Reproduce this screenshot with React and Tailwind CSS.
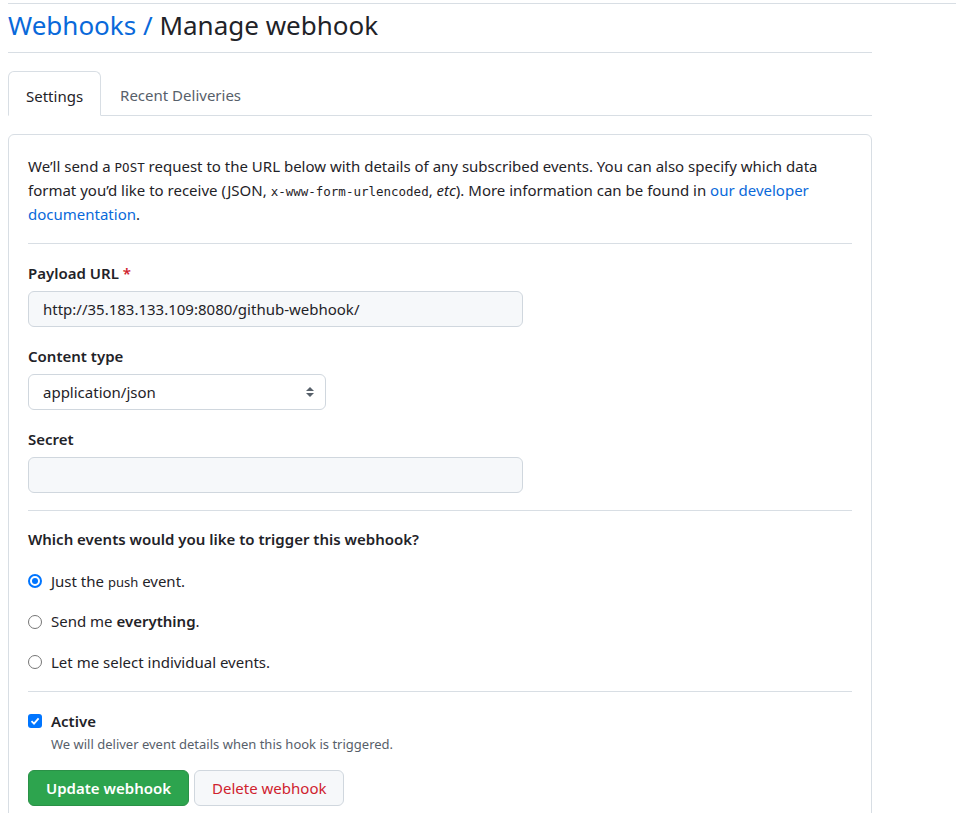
import React from 'react';

const font = { fontFamily: '"Noto Sans", "Liberation Sans", sans-serif' };
const mono = { fontFamily: '"DejaVu Sans Mono", monospace' };

const Radio = ({ checked, children }) => (
    <label className="flex items-center h-[24px]">
        <span
            className={`w-[14px] h-[14px] rounded-full flex items-center justify-center shrink-0 ${
                checked ? 'border-2 border-[#0075ff]' : 'border border-[#767676]'
            }`}
        >
            {checked ? <span className="w-[6px] h-[6px] rounded-full bg-[#0075ff]" /> : null}
        </span>
        <span className="ml-[9px] text-[15px] text-[#1f2328]">{children}</span>
    </label>
);

const App = () => {
    return (
        <div className="min-h-screen bg-white text-[#1f2328]" style={font}>
            <div className="pt-[3px]">
                <div className="ml-2 border-t border-[#d8dee4]" />
            </div>
            <div className="ml-2 w-[864px]">
                <div className="h-[49px] flex items-center border-b border-[#d8dee4] pb-[6px]">
                    <h1 className="text-[26px] leading-[32px] font-normal">
                        <span className="text-[#0969da]">Webhooks</span>
                        <span className="text-[#0969da]"> / </span>
                        <span>Manage webhook</span>
                    </h1>
                </div>

                <nav className="mt-[18px] flex items-end border-b border-[#d8dee4] h-[45px]">
                    <div className="h-[45px] -mb-px px-[17px] pt-[5px] flex items-center border border-[#d8dee4] border-b-white bg-white rounded-t-[6px] text-[15px] text-[#1f2328]">
                        Settings
                    </div>
                    <div className="h-[45px] px-[19px] pt-[5px] flex items-center text-[15px] text-[#57606a]">
                        Recent Deliveries
                    </div>
                </nav>

                <div className="mt-[18px] border border-[#d8dee4] rounded-[6px] px-[19px] pt-[19px] pb-[20px]">
                    <p className="text-[15px] leading-[24px] text-[#1f2328]">
                        We’ll send a{' '}
                        <code className="text-[12.5px] leading-none" style={mono}>
                            POST
                        </code>{' '}
                        request to the URL below with details of any subscribed events. You can also specify which data
                        format you’d like to receive (JSON,{' '}
                        <code className="text-[12.5px] leading-none" style={mono}>
                            x-www-form-urlencoded
                        </code>
                        , <em>etc</em>). More information can be found in{' '}
                        <a className="text-[#0969da]">our developer documentation</a>.
                    </p>

                    <div className="mt-[17px] border-t border-[#d8dee4]" />

                    <div className="mt-[19px] text-[15px] leading-[21px] font-semibold">
                        Payload URL <span className="text-[#cf222e]">*</span>
                    </div>
                    <div className="mt-[7px] w-[495px] h-[36px] border border-[#d0d7de] rounded-[6px] bg-[#f6f8fa] flex items-center px-[14px] text-[15px]">
                        http://35.183.133.109:8080/github-webhook/
                    </div>

                    <div className="mt-[19px] text-[15px] leading-[21px] font-semibold">Content type</div>
                    <div className="mt-[7px] w-[298px] h-[36px] border border-[#d0d7de] rounded-[6px] bg-white flex items-center justify-between pl-[14px] pr-[10px] text-[15px]">
                        <span>application/json</span>
                        <svg width="10" height="14" viewBox="0 0 10 14">
                            <path d="M5 2 L9 6 H1 Z" fill="#57606a" />
                            <path d="M5 12 L9 8 H1 Z" fill="#57606a" />
                        </svg>
                    </div>

                    <div className="mt-[19px] text-[15px] leading-[21px] font-semibold">Secret</div>
                    <div className="mt-[7px] w-[495px] h-[36px] border border-[#d0d7de] rounded-[6px] bg-[#f6f8fa]" />

                    <div className="mt-[17px] border-t border-[#d8dee4]" />

                    <div className="mt-[16px] text-[15px] leading-[24px] font-semibold">
                        Which events would you like to trigger this webhook?
                    </div>

                    <div className="mt-[18px] flex flex-col gap-[16.5px]">
                        <Radio checked>
                            Just the{' '}
                            <code className="text-[13px] leading-none" style={font}>
                                push
                            </code>{' '}
                            event.
                        </Radio>
                        <Radio>
                            Send me <strong className="font-semibold">everything</strong>.
                        </Radio>
                        <Radio>Let me select individual events.</Radio>
                    </div>

                    <div className="mt-[17px] border-t border-[#d8dee4]" />

                    <div className="mt-[17px] flex items-center h-[24px]">
                        <span className="w-[14px] h-[14px] rounded-[3px] bg-[#0075ff] flex items-center justify-center">
                            <svg width="10" height="10" viewBox="0 0 10 10">
                                <path d="M1.5 5.2 L4 7.6 L8.6 2.4" stroke="white" strokeWidth="1.8" fill="none" />
                            </svg>
                        </span>
                        <span className="ml-[9px] text-[15px] font-semibold">Active</span>
                    </div>
                    <div className="ml-[23px] mt-px text-[13px] leading-[20px] text-[#57606a]">
                        We will deliver event details when this hook is triggered.
                    </div>

                    <div className="mt-[16px] flex gap-[5px]">
                        <button className="h-[36px] px-[17px] rounded-[6px] bg-[#2da44e] border border-[#2a9147] text-white text-[15px] font-semibold">
                            Update webhook
                        </button>
                        <button className="h-[36px] px-[17px] rounded-[6px] bg-[#f6f8fa] border border-[#d0d7de] text-[#cf222e] text-[15px] font-normal">
                            Delete webhook
                        </button>
                    </div>
                </div>
            </div>
        </div>
    );
};

export default App;
